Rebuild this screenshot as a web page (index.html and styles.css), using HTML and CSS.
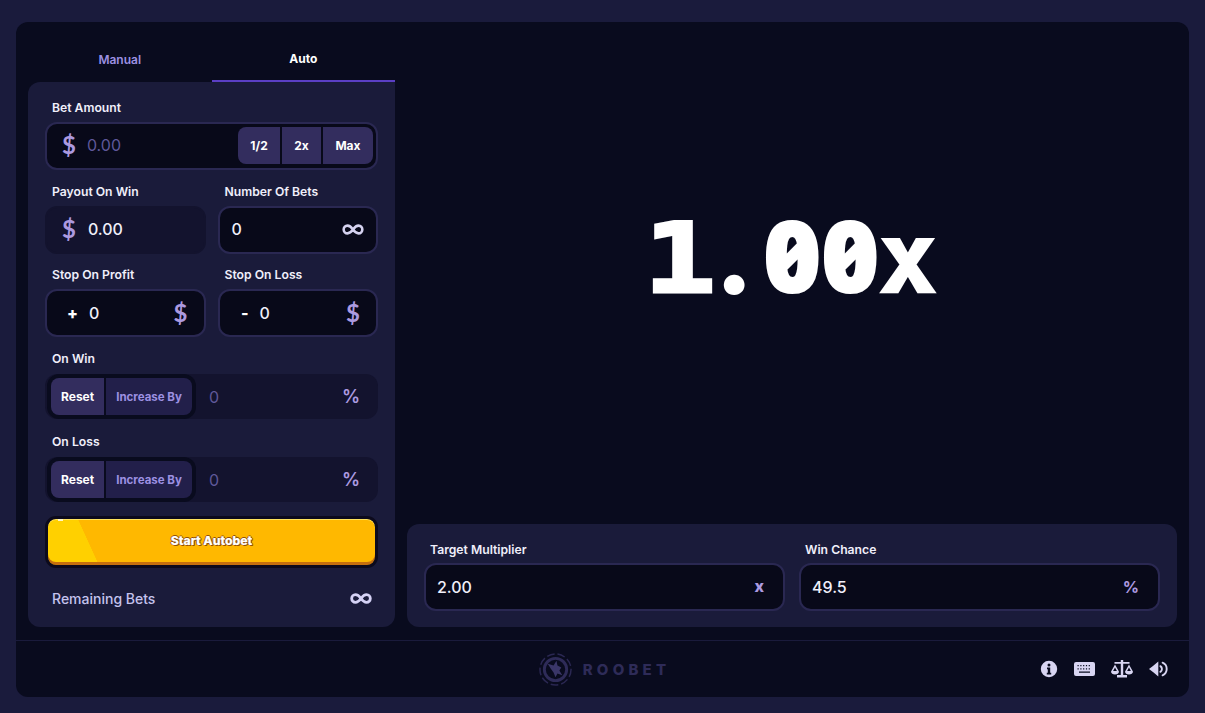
FILE: index.html
```html
<!DOCTYPE html>
<html lang="en">
<head>
    <meta charset="UTF-8">
    <meta name="viewport" content="width=device-width, initial-scale=1.0">
    <title>Roobet Crash</title>
    <link rel="stylesheet" href="styles.css">
</head>
<body>
    <div class="game">
        <div class="game-main">
            <div class="sidebar">
                <div class="tabs">
                    <div class="tab">Manual</div>
                    <div class="tab active">Auto</div>
                </div>
                <div class="panel">
                    <div class="form-group">
                        <div class="label">Bet Amount</div>
                        <div class="field bet-field">
                            <span class="unit unit-lead">$</span>
                            <span class="value muted">0.00</span>
                            <div class="quick-btns">
                                <span class="quick-btn btn-half">1/2</span>
                                <span class="quick-btn btn-double">2x</span>
                                <span class="quick-btn btn-max">Max</span>
                            </div>
                        </div>
                    </div>
                    <div class="form-row row-payout">
                        <div class="form-group">
                            <div class="label">Payout On Win</div>
                            <div class="field field-disabled">
                                <span class="unit unit-lead">$</span>
                                <span class="value value-payout">0.00</span>
                            </div>
                        </div>
                        <div class="form-group">
                            <div class="label">Number Of Bets</div>
                            <div class="field field-plain">
                                <span class="value">0</span>
                                <svg class="infinity" viewBox="0 0 24 12"><path d="M12 6C9.500 2.600 8 1.800 6 1.800a4.200 4.200 0 0 0 0 8.400c2 0 3.500-.8 6-4.200s4-4.200 6-4.200a4.200 4.200 0 0 1 0 8.400c-2 0-3.500-.8-6-4.200z"/></svg>
                            </div>
                        </div>
                    </div>
                    <div class="form-row row-stop">
                        <div class="form-group">
                            <div class="label">Stop On Profit</div>
                            <div class="field field-plain">
                                <span class="sign sign-plus">+</span>
                                <span class="value">0</span>
                                <span class="unit unit-end">$</span>
                            </div>
                        </div>
                        <div class="form-group">
                            <div class="label">Stop On Loss</div>
                            <div class="field field-plain">
                                <span class="sign sign-minus">-</span>
                                <span class="value">0</span>
                                <span class="unit unit-end">$</span>
                            </div>
                        </div>
                    </div>
                    <div class="form-group group-toggle">
                        <div class="label">On Win</div>
                        <div class="toggle-field">
                            <div class="toggle">
                                <span class="toggle-btn selected">Reset</span>
                                <span class="toggle-btn">Increase By</span>
                            </div>
                            <span class="value muted">0</span>
                            <span class="percent">%</span>
                        </div>
                    </div>
                    <div class="form-group group-toggle">
                        <div class="label">On Loss</div>
                        <div class="toggle-field">
                            <div class="toggle">
                                <span class="toggle-btn selected">Reset</span>
                                <span class="toggle-btn">Increase By</span>
                            </div>
                            <span class="value muted">0</span>
                            <span class="percent">%</span>
                        </div>
                    </div>
                    <div class="start-btn"><span>Start Autobet</span></div>
                    <div class="remaining">
                        <span>Remaining Bets</span>
                        <svg class="infinity infinity-light" viewBox="0 0 24 12"><path d="M12 6C9.500 2.600 8 1.800 6 1.800a4.200 4.200 0 0 0 0 8.400c2 0 3.500-.8 6-4.200s4-4.200 6-4.200a4.200 4.200 0 0 1 0 8.400c-2 0-3.500-.8-6-4.200z"/></svg>
                    </div>
                </div>
            </div>
            <div class="stage">
                <div class="multiplier">
                    <div class="multiplier-text"><span class="one">1</span><span class="dot">.</span><span class="zero">0</span><span class="zero">0</span><span>x</span></div>
                </div>
                <div class="target-panel">
                    <div class="target-group">
                        <div class="label">Target Multiplier</div>
                        <div class="field field-plain">
                            <span class="value">2.00</span>
                            <span class="target-unit target-x">x</span>
                        </div>
                    </div>
                    <div class="target-group">
                        <div class="label">Win Chance</div>
                        <div class="field field-plain">
                            <span class="value">49.5</span>
                            <span class="target-unit">%</span>
                        </div>
                    </div>
                </div>
            </div>
        </div>
        <div class="footer">
            <div class="logo">
                <svg class="logo-mark" width="33" height="33" viewBox="0 0 34 34">
                    <circle class="logo-ring" cx="17" cy="17" r="16"/>
                    <circle class="logo-inner" cx="17" cy="17" r="11.500"/>
                    <path class="logo-roo" d="M9 11l6 2 3-5 1 5 4 2-2 3 3 5-5-2-2 4-2-5-3-4z"/>
                </svg>
                <span class="logo-text">ROOBET</span>
            </div>
            <div class="footer-icons">
                <svg class="icon" width="18" height="18" viewBox="0 0 18 18">
                    <path fill-rule="evenodd" d="M9 .8a8.200 8.200 0 1 0 0 16.400A8.200 8.200 0 0 0 9 .8zM9 3.400a1.500 1.500 0 1 1 0 3 1.500 1.500 0 0 1 0-3zM7 7.600h3.200v5.200h1v1.600H6.800v-1.600h1V9.200H7z"/>
                </svg>
                <svg class="icon" width="21" height="14" viewBox="0 0 21 14">
                    <path fill-rule="evenodd" d="M2 0h17a2 2 0 0 1 2 2v10a2 2 0 0 1-2 2H2a2 2 0 0 1-2-2V2a2 2 0 0 1 2-2zM3.500 3v1.200h1.200V3zm2.800 0v1.200h1.200V3zm2.800 0v1.200h1.200V3zm2.800 0v1.200h1.200V3zm2.800 0v1.200h1.200V3zM3.500 6.200v1.200h1.200V6.200zm2.800 0v1.200h1.200V6.200zm2.800 0v1.200h1.200V6.200zm2.800 0v1.200h1.200V6.200zm2.800 0v1.200h1.200V6.200zM5 9.500v1.200h11V9.500z"/>
                </svg>
                <svg class="icon" width="22" height="18" viewBox="0 0 22 18">
                    <path fill-rule="evenodd" d="M9.800 0h2.400v2h6.300v1.800h-6.300V15H16v2.500H6V15h3.800V3.800H3.500V2h6.300zM4 4.500l3.900 7H8c0 1.800-1.800 3-4 3s-4-1.200-4-3h.1zM4 7.400L2.100 11h3.800zM18 4.500l3.900 7h.1c0 1.800-1.800 3-4 3s-4-1.200-4-3h.1zM18 7.400L16.100 11h3.800z"/>
                </svg>
                <svg class="icon" width="19" height="18" viewBox="0 0 20 18">
                    <path d="M0 9L4.500 5.500 9.800 1v16L4.500 12.500z"/>
                    <path class="sound-wave" d="M12 6a3.600 3.600 0 0 1 0 6M14.300 2.400a7.200 7.200 0 0 1 0 13.200"/>
                </svg>
            </div>
        </div>
    </div>
</body>
</html>
```

FILE: styles.css
```css
* {
    box-sizing: border-box;
}
html, body {
    height: 100%;
}
body {
    margin: 0;
    padding: 22px 16px 16px;
    background-color: #1a1b3c;
    font-family: Inter, "Noto Sans", Arial, sans-serif;
    color: #fff;
    overflow: hidden;
}
.game {
    height: 675px;
    display: flex;
    flex-direction: column;
    background-color: #090b1e;
    border-radius: 12px;
}
.game-main {
    height: 619px;
    padding: 14px 12px 13px;
    display: flex;
    gap: 12px;
    border-bottom: 1px solid #1a1b3c;
}

/* left column */
.sidebar {
    width: 367px;
    display: flex;
    flex-direction: column;
}
.tabs {
    display: flex;
    height: 46px;
}
.tab {
    flex: 1;
    display: flex;
    align-items: center;
    justify-content: center;
    font-size: 12px;
    font-weight: 600;
    color: #9c90e2;
}
.tab.active {
    color: #fff;
    font-weight: 700;
    border-bottom: 2px solid #5b3fc4;
}
.panel {
    flex: 1;
    padding: 17px 17px 0;
    background-color: #1a1b3a;
    border-radius: 12px 0 12px 12px;
}
.form-group {
    margin-bottom: 13px;
}
.row-payout .form-group {
    margin-bottom: 12px;
}
.group-toggle {
    margin-bottom: 14px;
}
.group-toggle .label {
    margin-bottom: 8px;
}
.form-row {
    display: grid;
    grid-template-columns: 1fr 1fr;
    gap: 12px;
}
.label {
    height: 16px;
    margin: 0 0 7px 7px;
    font-size: 12.200px;
    line-height: 17px;
    font-weight: 600;
    color: #f0effa;
    white-space: nowrap;
}

/* inputs */
.field {
    height: 48px;
    padding-bottom: 2px;
    display: flex;
    align-items: center;
    background-color: #080919;
    border: 2px solid #2a2852;
    border-radius: 12px;
}
.field-plain {
    justify-content: space-between;
    padding: 0 12px 2px;
}
.row-stop .field-plain {
    padding-bottom: 0;
}
.field-disabled {
    background-color: #13132e;
    border-color: #13132e;
}
.value {
    font-size: 16px;
    font-weight: 500;
    color: #f0effa;
}
.value.muted {
    font-weight: 400;
    color: #5f5899;
}
.value-payout {
    margin-left: 12px;
}
.unit {
    font-family: Lato, Inter, sans-serif;
    font-size: 24px;
    line-height: 1;
    font-weight: 700;
    color: #ac9ae0;
}
.unit-lead {
    margin-left: 15px;
}
.bet-field .value {
    margin-left: 11px;
}
.unit-end {
    margin-left: auto;
    margin-right: 4px;
}
.sign {
    font-size: 16px;
    font-weight: 800;
    width: 19px;
    margin-right: 11px;
    text-align: right;
}
.sign-minus {
    width: 17px;
}
.infinity {
    width: 22px;
    height: 11px;
    fill: none;
    stroke: #d5d2f0;
    stroke-width: 2.800;
}
.infinity-light {
    margin-right: -1px;
    stroke-width: 3;
    stroke: #d5d2f5;
}
.quick-btns {
    align-self: flex-start;
    margin: 3px 3px 0 auto;
    display: flex;
    gap: 2px;
}
.quick-btn {
    height: 37px;
    display: flex;
    align-items: center;
    justify-content: center;
    background-color: #332d5e;
    font-size: 12px;
    font-weight: 700;
}
.btn-half {
    width: 42px;
    border-radius: 8px 0 0 8px;
}
.btn-double {
    width: 39px;
}
.btn-max {
    width: 50px;
    border-radius: 0 8px 8px 0;
}

/* on win, on loss */
.toggle-field {
    height: 45px;
    display: flex;
    align-items: center;
    padding-right: 18px;
    background-color: #13132e;
    border-radius: 12px;
}
.toggle-field .value {
    margin-left: 13px;
}
.toggle {
    height: 45px;
    margin-left: 2px;
    display: flex;
    gap: 2px;
    padding: 4px;
    background-color: #090b1e;
    border-radius: 12px;
}
.toggle-btn {
    display: flex;
    align-items: center;
    padding: 0 10px;
    background-color: #221f4a;
    font-size: 11.500px;
    font-weight: 700;
    color: #9c90e2;
    border-radius: 0 8px 8px 0;
}
.toggle-btn.selected {
    background-color: #332d5e;
    font-size: 12px;
    color: #fff;
    border-radius: 8px 0 0 8px;
}
.percent {
    margin-left: auto;
    font-size: 18px;
    font-weight: 600;
    color: #ac9ae0;
}

/* start button */
.start-btn {
    position: relative;
    height: 52px;
    margin-top: 1px;
    padding-bottom: 3px;
    display: flex;
    align-items: center;
    justify-content: center;
    background-color: #ffb800;
    background-image: linear-gradient(65.500deg, #ffd000 0, #ffd000 46px, transparent 46.500px);
    background-clip: padding-box;
    border: 3px solid #0c0a1c;
    border-radius: 11px;
    box-shadow: inset 0 -3px 0 #c66f0e, inset 0 1px 0 #ffe35c;
    font-size: 12.200px;
    font-weight: 800;
    -webkit-text-stroke: .2px #fff;
    text-shadow: 0 0 1px #8a4a00, 1px 1px 0 #94520a, -1px 0 0 #94520a, 0 -1px 0 #94520a, 1px 0 0 #94520a;
}
.start-btn::before {
    content: "";
    position: absolute;
    top: 0;
    left: 10px;
    width: 5px;
    height: 2px;
    background-color: #fff6c8;
}
.remaining {
    margin: 22px 7px 0;
    display: flex;
    align-items: center;
    justify-content: space-between;
    font-size: 14px;
    font-weight: 500;
    color: #c5c3ee;
}

/* right side */
.stage {
    flex: 1;
    display: flex;
    flex-direction: column;
}
.multiplier {
    flex: 1;
    display: flex;
    align-items: center;
    justify-content: center;
    padding-bottom: 52px;
}
.multiplier-text {
    display: flex;
    align-items: baseline;
    font-family: "DejaVu Sans Mono", monospace;
    font-size: 96px;
    font-weight: 700;
    -webkit-text-stroke: 2.500px #fff;
}
.multiplier-text .one {
    width: 58px;
    transform: translateX(4px) scaleX(1.250);
    -webkit-text-stroke: 3px #fff;
}
.multiplier-text .dot {
    width: 58px;
    display: flex;
    justify-content: center;
    font-family: Lato, sans-serif;
    font-weight: 900;
    -webkit-text-stroke: 5px #fff;
}
.multiplier-text .zero {
    width: 58px;
    display: flex;
    justify-content: center;
    font-family: "Open Sans", sans-serif;
    font-size: 98px;
    font-weight: 800;
    font-feature-settings: "zero" 1, "tnum" 1;
    -webkit-text-stroke: 2px #fff;
}
.target-panel {
    height: 103px;
    padding: 17px 17px 0;
    display: flex;
    gap: 14px;
    background-color: #1a1b3a;
    border-radius: 12px;
}
.target-group {
    flex: 1;
}
.target-group .label {
    margin: 0 0 6px 6px;
}
.target-group .field-plain {
    padding: 0 12px 0 11px;
}
.target-unit {
    font-size: 16px;
    font-weight: 700;
    color: #ac9ae0;
    margin-right: 7px;
}
.target-x {
    margin-bottom: 3px;
    font-weight: 800;
}

/* footer */
.footer {
    flex: 1;
    position: relative;
    display: flex;
    align-items: center;
    justify-content: center;
}
.logo {
    margin-left: 4px;
    display: flex;
    align-items: center;
    gap: 11px;
}
.logo-ring {
    fill: none;
    stroke: #2a2752;
    stroke-width: 1.500;
    stroke-dasharray: 8 3;
}
.logo-inner {
    fill: none;
    stroke: #2e2b58;
    stroke-width: 3;
}
.logo-roo {
    fill: #3a3668;
}
.logo-text {
    font-size: 15px;
    font-weight: 800;
    letter-spacing: 4.200px;
    color: #2e2b58;
}
.footer-icons {
    position: absolute;
    right: 21px;
    top: 0;
    bottom: 0;
    display: flex;
    align-items: center;
    gap: 16px;
}
.icon {
    fill: #d8d5f2;
}
.sound-wave {
    fill: none;
    stroke: #d8d5f2;
    stroke-width: 2;
    stroke-linecap: round;
}
```
